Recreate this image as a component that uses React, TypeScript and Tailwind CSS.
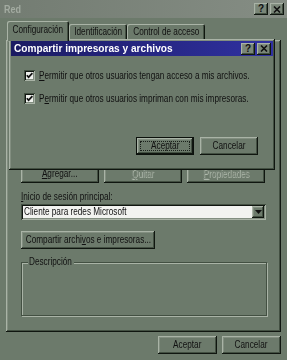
import React from 'react';

const RAISED =
  'shadow-[inset_-1px_-1px_0_#101610,inset_1px_1px_0_#a9b3a6,inset_-2px_-2px_0_#435042,inset_2px_2px_0_#828e80]';
const SUNKEN =
  'shadow-[inset_1px_1px_0_#435042,inset_-1px_-1px_0_#a9b3a6,inset_2px_2px_0_#101610,inset_-2px_-2px_0_#828e80]';

function N({ children, c }: { children: React.ReactNode; c?: boolean }) {
  return (
    <span
      className={
        c
          ? 'inline-block shrink-0 whitespace-nowrap scale-x-[0.82] origin-center'
          : 'inline-block shrink-0 whitespace-nowrap scale-x-[0.82] origin-left'
      }
    >
      {children}
    </span>
  );
}

function Btn({
  children,
  w,
  focused,
  disabled,
}: {
  children: React.ReactNode;
  w: string;
  focused?: boolean;
  disabled?: boolean;
}) {
  if (focused) {
    return (
      <div className={`${w} h-[18px] border border-[#0c110c] bg-[#6c7a6b] shrink-0`}>
        <div className={`w-full h-full ${RAISED} p-[3px]`}>
          <div className="w-full h-full border border-dotted border-[#1a201a] flex items-center justify-center text-[#111]">
            <N c>{children}</N>
          </div>
        </div>
      </div>
    );
  }
  return (
    <div
      className={`${w} h-[18px] bg-[#6c7a6b] ${RAISED} flex items-center justify-center shrink-0 ${
        disabled ? 'text-[#7b877a] [text-shadow:1px_1px_0_#aeb8ab]' : 'text-[#111]'
      }`}
    >
      <N c>{children}</N>
    </div>
  );
}

function TitleBtn({ kind }: { kind: '?' | 'x' }) {
  return (
    <div className={`w-[14px] h-[12px] bg-[#7a8678] ${RAISED} flex items-center justify-center`}>
      {kind === '?' ? (
        <span className="text-[10px] font-bold leading-none text-[#111]">?</span>
      ) : (
        <svg width="8" height="7" viewBox="0 0 8 7">
          <path d="M1 0.5 L7 6.5 M7 0.5 L1 6.5" stroke="#111" strokeWidth="1.6" />
        </svg>
      )}
    </div>
  );
}

function Check() {
  return (
    <div className={`w-[11px] h-[11px] bg-[#eef0ec] ${SUNKEN} flex items-center justify-center shrink-0`}>
      <svg width="7" height="7" viewBox="0 0 7 7">
        <polyline points="0.8,3.2 2.6,5.2 6.4,1.2" fill="none" stroke="#111" strokeWidth="1.7" />
      </svg>
    </div>
  );
}

const TAB = 'rounded-t-[2px] shadow-[inset_1px_1px_0_#a9b3a6,inset_-1px_0_0_#101610,inset_-2px_0_0_#435042] flex items-center justify-center';

export default function App() {
  return (
    <div
      className="relative w-[287px] h-[360px] overflow-hidden bg-[#6c7a6b] text-[10px] leading-[12px] text-[#111]"
      style={{ fontFamily: '"Liberation Sans", Arial, sans-serif' }}
    >
      {/* Outer title bar (inactive) */}
      <div className="h-[18px] bg-gradient-to-r from-[#737c72] to-[#858d84] flex items-center pl-[4px] pr-[3px]">
        <span className="text-[11px] font-bold text-[#a3aba1]">
          <N>Red</N>
        </span>
        <div className="ml-auto flex gap-[2px]">
          <TitleBtn kind="?" />
          <TitleBtn kind="x" />
        </div>
      </div>

      {/* Tabs */}
      <div className="mt-[3px] h-[19px] flex items-end pl-[7px]">
        <div className={`relative z-10 -mb-[1px] h-[20px] w-[62px] bg-[#6c7a6b] ${TAB} pb-[2px]`}>
          <N c>Configuración</N>
        </div>
        <div className={`h-[16px] w-[58px] ${TAB}`}>
          <N c>Identificación</N>
        </div>
        <div className={`h-[16px] w-[78px] ${TAB}`}>
          <N c>Control de acceso</N>
        </div>
      </div>

      {/* Tab panel */}
      <div className={`ml-[6px] w-[275px] h-[292px] ${RAISED} pl-[15px] pt-[8px] flex flex-col`}>
        <div className={`w-[245px] h-[115px] bg-[#eef0ec] ${SUNKEN}`} />
        <div className="mt-[2px] flex gap-[5px]">
          <Btn w="w-[78px]">
            <span className="underline">A</span>gregar...
          </Btn>
          <Btn w="w-[78px]" disabled>
            <span className="underline">Q</span>uitar
          </Btn>
          <Btn w="w-[78px]" disabled>
            <span className="underline">P</span>ropiedades
          </Btn>
        </div>
        <div className="mt-[8px] h-[12px]">
          <N>
            <span className="underline">I</span>nicio de sesión principal:
          </N>
        </div>
        <div className={`mt-[1px] w-[245px] h-[16px] bg-[#f2f3f0] ${SUNKEN} flex items-center pl-[3px] pr-[2px]`}>
          <N>Cliente para redes Microsoft</N>
          <div className={`ml-auto w-[12px] h-[12px] bg-[#6c7a6b] ${RAISED} flex items-center justify-center`}>
            <svg width="7" height="4" viewBox="0 0 7 4">
              <polygon points="0,0 7,0 3.5,4" fill="#111" />
            </svg>
          </div>
        </div>
        <div className="mt-[11px]">
          <Btn w="w-[134px]">
            Compartir archi<span className="underline">v</span>os e impresoras...
          </Btn>
        </div>
        <div className="relative mt-[13px] w-[246px] h-[54px] border border-[#435042] shadow-[inset_1px_1px_0_#a9b3a6,1px_1px_0_#a9b3a6]">
          <span className="absolute left-[6px] -top-[7px] w-[46px] bg-[#6c7a6b] leading-[12px] pl-[1px]">
            <N>Descripción</N>
          </span>
        </div>
      </div>

      {/* Bottom buttons */}
      <div className="mt-[4px] flex justify-end gap-[5px] pr-[6px]">
        <Btn w="w-[59px]">Aceptar</Btn>
        <Btn w="w-[59px]">Cancelar</Btn>
      </div>

      {/* Inner dialog */}
      <div className={`absolute left-[9px] top-[39px] w-[266px] h-[131px] bg-[#6c7a6b] ${RAISED} p-[2px] flex flex-col`}>
        <div className="h-[15px] bg-gradient-to-r from-[#1b1b62] to-[#3031a2] flex items-center pl-[3px] pr-[2px]">
          <span className="inline-block whitespace-nowrap text-[11px] font-bold text-white leading-none scale-x-[0.92] origin-left">
            Compartir impresoras y archivos
          </span>
          <div className="ml-auto flex gap-[2px]">
            <TitleBtn kind="?" />
            <TitleBtn kind="x" />
          </div>
        </div>
        <div className="pl-[13px] pt-[13px] flex flex-col">
          <div className="h-[13px] flex items-center gap-[4px]">
            <Check />
            <N>
              <span className="underline">P</span>ermitir que otros usuarios tengan acceso a mis archivos.
            </N>
          </div>
          <div className="mt-[10px] h-[13px] flex items-center gap-[4px]">
            <Check />
            <N>
              P<span className="underline">e</span>rmitir que otros usuarios impriman con mis impresoras.
            </N>
          </div>
        </div>
        <div className="mt-[32px] flex justify-end gap-[6px] pr-[15px]">
          <Btn w="w-[58px]" focused>
            Aceptar
          </Btn>
          <Btn w="w-[58px]">Cancelar</Btn>
        </div>
      </div>
    </div>
  );
}
